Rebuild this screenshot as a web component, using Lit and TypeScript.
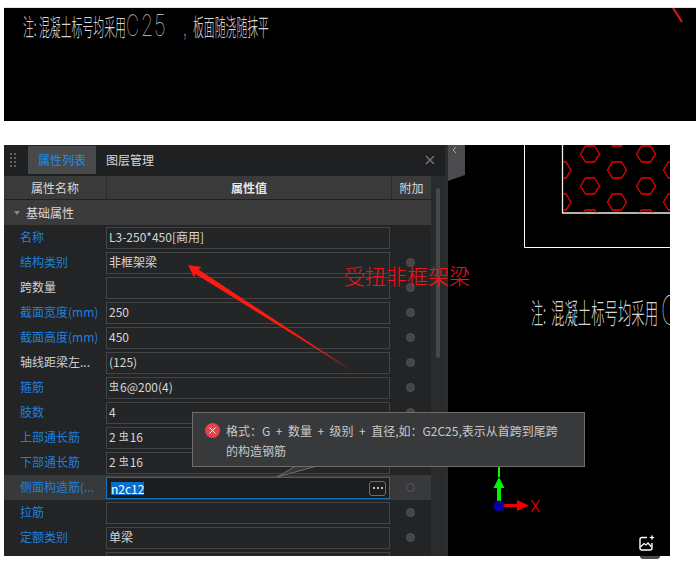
import { LitElement, html, css, svg } from "lit";
import { customElement } from "lit/decorators.js";

interface Row { label: string; value: string; blue: boolean; dot: boolean; active?: boolean; }

const COLON = "\uFF1A";
const TIP_LINE = `格式${COLON}G + 数量 + 级别 + 直径,如${COLON}G2C25,表示从首跨到尾跨`;

const ROWS: Row[] = [
  { label: "名称", value: "L3-250*450[商用]", blue: true, dot: false },
  { label: "结构类别", value: "非框架梁", blue: true, dot: true },
  { label: "跨数量", value: "", blue: false, dot: true },
  { label: "截面宽度(mm)", value: "250", blue: true, dot: true },
  { label: "截面高度(mm)", value: "450", blue: true, dot: true },
  { label: "轴线距梁左...", value: "(125)", blue: false, dot: true },
  { label: "箍筋", value: "~6@200(4)", blue: true, dot: true },
  { label: "肢数", value: "4", blue: true, dot: true },
  { label: "上部通长筋", value: "2~16", blue: true, dot: true },
  { label: "下部通长筋", value: "2~16", blue: true, dot: true },
  { label: "侧面构造筋(...", value: "n2c12", blue: true, dot: true, active: true },
  { label: "拉筋", value: "", blue: true, dot: true },
  { label: "定额类别", value: "单梁", blue: true, dot: true },
  { label: "", value: "", blue: false, dot: false },
];

const HEXES: [number, number][] = [
  [617, 138], [590, 154], [646, 154], [561.5, 170], [617, 170], [673, 170],
  [590, 186], [646, 186], [561.5, 202], [617, 202], [673, 202], [590, 218], [646, 218],
];

const hexPoints = (cx: number, cy: number) =>
  [[-9.5, 0], [-4.5, -8], [4.5, -8], [9.5, 0], [4.5, 8], [-4.5, 8]]
    .map(([x, y]) => `${cx + x},${cy + y}`).join(" ");

/** CAD text is drawn condensed: real text, squeezed horizontally. */
const cadText = (x: number, y: number, size: number, sx: number, text: string, cls = "cad-text") =>
  svg`<text class=${cls} transform="translate(${x} ${y}) scale(${sx} 1)" font-size=${size}>${text}</text>`;

@customElement("app-root")
export class AppRoot extends LitElement {
  static styles = css`
    :host {
      display: block;
      width: 696px;
      height: 572px;
      background: #fff;
      overflow: hidden;
      font-family: "Noto Sans CJK SC", "Liberation Sans", sans-serif;
      font-size: 12px;
    }
    .banner { margin: 7px 0 0 4px; border-top: 1px solid #e4e4e4; background: #000; height: 113px; }
    .banner svg, .cad svg { display: block; }
    .cad-text { font-family: "Noto Sans CJK SC", sans-serif; font-weight: 300; fill: #d6d6d6; }
    .thin { font-family: "Inter", "Liberation Sans", sans-serif; font-weight: 100; fill: #cfcfcf; }
    .work { position: relative; display: flex; margin: 24px 0 0 4px; width: 666px; height: 411px; }
    .panel { width: 441px; border-right: 3px solid #2c2d2f; background: #232426; display: flex; flex-direction: column; color: #d2d2d2; overflow: hidden; }
    .tabs { height: 31px; flex: none; display: flex; align-items: flex-start; background: #1f2022; position: relative; }
    .grip { width: 8px; margin: 8px 10px 0 6px; display: grid; grid-template-columns: 2px 2px; gap: 2px 2px; }
    .grip i { width: 2px; height: 2px; background: #5f6062; display: block; }
    .tab { height: 28px; line-height: 28px; margin-top: 1px; padding: 0 10px; width: 48px; color: #d8d8d8; }
    .tab.on { background: #48494b; color: #2289e6; margin-right: 0; }
    .tab.off { margin-left: 0; }
    .close { margin-left: auto; margin-right: 10px; margin-top: 10px; width: 10px; height: 10px; }
    .main { flex: 1; display: flex; min-height: 0; }
    .table { width: 427px; flex: none; overflow: hidden; }
    .gutter { flex: 1; background: #2a2b2d; }
    .thumb { width: 4px; height: 170px; margin: 12px 0 0 5px; border-radius: 2px; background: #47484a; }
    .head { display: grid; grid-template-columns: 102px 285px 40px; height: 23px; line-height: 23px; background: #3a3a3b; border-bottom: 1px solid #1f2022; text-align: center; color: #d8d8d8; }
    .head div + div { border-left: 1px solid #2b2c2e; }
    .head .val { font-weight: 700; color: #e6e6e6; }
    .group { height: 25px; line-height: 25px; background: #3b3b3c; display: flex; align-items: center; color: #d8d8d8; }
    .caret { width: 0; height: 0; margin: 0 6px 0 10px; border: 3px solid transparent; border-top: 4px solid #8a8a8a; border-bottom: 0; }
    .row { height: 25px; display: grid; grid-template-columns: 102px 284px 41px; align-items: start; }
    .row.active { background: #38393b; }
    .label { padding-left: 16px; line-height: 23px; color: #cfcfcf; white-space: nowrap; overflow: hidden; }
    .label.blue { color: #1f80dc; }
    .field { height: 22px; margin-top: 2px; box-sizing: border-box; border: 1px solid #434445; background: #242527; padding: 0 2px 2px; line-height: 18px; color: #d6d6d6; display: flex; align-items: center; justify-content: space-between; white-space: nowrap; }
    .field.active { border-color: #1272b8; background: #1c1d1f; padding: 0 2px 0 4px; }
    .sel { background: #0a6ecc; color: #fff; line-height: 13px; height: 13px; display: block; }
    .more { width: 15px; height: 13px; border: 1px solid #6c6c6c; border-radius: 3px; display: flex; align-items: center; justify-content: center; gap: 2px; box-sizing: content-box; margin-right: 1px; }
    .more i { width: 2px; height: 2px; background: #bdbdbd; display: block; }
    .rebar { font-size: 10px; position: relative; top: -2px; margin: 0 1px 0 3px; }
    .rebar.first { margin-left: 0; }
    .dot { width: 9px; height: 9px; margin: 8px 0 0 16px; box-sizing: border-box; border-radius: 50%; background: #444547; border: 1px solid #515254; }
    .row.active .dot { background: #39393b; border-color: #58595b; }
    .cad { width: 222px; height: 411px; background: #000; flex: none; overflow: hidden; }
    .overlay { position: absolute; left: 0; top: 0; width: 666px; height: 427px; pointer-events: none; overflow: visible; }
    .note { position: absolute; left: 340px; top: 115px; font-size: 21px; line-height: 30px; color: #f01414; font-weight: 300; white-space: nowrap; }
    .tip { position: absolute; left: 188px; top: 267px; width: 393px; height: 55px; box-sizing: border-box; background: #38393b; border: 1px solid #6e6e6e; color: #c9c9c9; padding: 8px 0 0 33px; line-height: 20px; font-size: 12px; word-spacing: 2.8px; }
    .tip p { margin: 0; white-space: pre; }
    .err { position: absolute; left: 12px; top: 10px; width: 15px; height: 15px; }
    .tail { position: absolute; left: 272px; top: 320px; width: 42px; height: 13px; }
    .ai { position: absolute; left: 632px; top: 388px; width: 20px; height: 20px; }
    .ai-shade { position: absolute; left: 636px; top: 411px; width: 20px; height: 3px; border-radius: 0 0 10px 10px; background: #4a4a4a; }
  `;

  private value(v: string) {
    const parts = v.split("~");
    if (parts.length === 1) return v;
    return html`${parts[0]}<span class="rebar ${parts[0] ? "" : "first"}">虫</span>${parts[1]}`;
  }

  private row(r: Row) {
    return html`<div class="row ${r.active ? "active" : ""}">
      <div class="label ${r.blue ? "blue" : ""}">${r.label}</div>
      <div class="field ${r.active ? "active" : ""}">
        ${r.active
          ? html`<span class="sel">${r.value}</span><span class="more"><i></i><i></i><i></i></span>`
          : html`<span>${this.value(r.value)}</span>`}
      </div>
      ${r.dot ? html`<div class="dot"></div>` : html`<div></div>`}
    </div>`;
  }

  render() {
    return html`
      <div class="banner">
        <svg width="692" height="113" viewBox="4 8 692 113">
          ${cadText(23, 36, 24, 0.45, "注:")}
          ${cadText(39, 36, 24, 0.453, "混凝土标号均采用")}
          ${cadText(126, 36, 29, 0.62, "C", "thin")}
          ${cadText(141, 36, 29, 0.68, "2", "thin")}
          ${cadText(154, 36, 29, 0.72, "5", "thin")}
          ${cadText(184, 36, 24, 0.29, ",")}
          ${cadText(193, 36, 24, 0.452, "板面随浇随抹平")}
          <line x1="673" y1="8" x2="682" y2="22" stroke="#e8102a" stroke-width="2"></line>
        </svg>
      </div>
      <div class="work">
        <section class="panel">
          <div class="tabs">
            <div class="grip">${Array.from({ length: 8 }, () => html`<i></i>`)}</div>
            <div class="tab on">属性列表</div>
            <div class="tab off">图层管理</div>
            <svg class="close" viewBox="0 0 10 10"><path d="M1 1l8 8M9 1l-8 8" stroke="#77787a" stroke-width="1.2" fill="none"></path></svg>
          </div>
          <div class="main">
            <div class="table">
              <div class="head"><div>属性名称</div><div class="val">属性值</div><div>附加</div></div>
              <div class="group"><span class="caret"></span>基础属性</div>
              ${ROWS.map((r) => this.row(r))}
            </div>
            <div class="gutter"><div class="thumb"></div></div>
          </div>
        </section>
        <div class="cad">
          <svg width="222" height="411" viewBox="448 145 222 411">
            <polygon points="448,145 465,145 465,175 448,181" fill="#4b4b4d"></polygon>
            <path d="M456 147l-3 3 3 3" stroke="#a8a8a8" stroke-width="1" fill="none"></path>
            <path d="M524.5 145V247.5H670" stroke="#fff" stroke-width="1" fill="none"></path>
            <path d="M562.5 145V213H670" stroke="#eee" stroke-width="1.3" fill="none"></path>
            <svg x="563" y="145" width="107" height="67.5" viewBox="563 145 107 67.5">
              ${HEXES.map(([x, y]) => svg`<polygon points=${hexPoints(x, y)} fill="none" stroke="#f00000" stroke-width="1.3"></polygon>`)}
            </svg>
            ${cadText(531, 324, 28, 0.43, "注:")}
            ${cadText(551, 324, 28, 0.478, "混凝土标号均采用")}
            ${cadText(661, 325, 40, 0.6, "C", "thin")}
            <path d="M498 467h2v10h-2z" fill="#00ff00"></path>
            <path d="M499 477l5.5 11h-3.5v18h-4v-18h-3.5z" fill="#00f000"></path>
            <path d="M499 504h18v-4l12 5.5-12 5.5v-4h-18z" fill="#f00000"></path>
            <circle cx="499" cy="506" r="5.5" fill="#0000a0"></circle>
            <path d="M531.5 500l8 12M539.5 500l-8 12" stroke="#f00000" stroke-width="1.2" fill="none"></path>
          </svg>
        </div>
        <svg class="overlay" viewBox="4 145 666 427">
          <polygon points="188,265 201.5,267 198.5,269.5 354,372 195.5,274 194,277.5" fill="#ff1a10"></polygon>
        </svg>
        <div class="note">受扭非框架梁</div>
        <svg class="tail" viewBox="0 0 42 13">
          <polygon points="1,12 20,1 41,1" fill="#38393b"></polygon>
          <path d="M1 12L20 1M1 12L41 1" stroke="#6e6e6e" stroke-width="1" fill="none"></path>
        </svg>
        <div class="tip">
          <svg class="err" viewBox="0 0 15 15">
            <circle cx="7.5" cy="7.5" r="7.5" fill="#ea4049"></circle>
            <path d="M4.5 4.5l6 6M10.5 4.5l-6 6" stroke="#fff" stroke-width="1" fill="none"></path>
          </svg>
          <p>${TIP_LINE}</p>
          <p>的构造钢筋</p>
        </div>
        <div class="ai-shade"></div>
        <svg class="ai" viewBox="0 0 20 20">
          <path d="M11 4.5H6a2 2 0 0 0-2 2V15a2 2 0 0 0 2 2h8a2 2 0 0 0 2-2V10" stroke="#fff" stroke-width="1.4" fill="none"></path>
          <path d="M4.5 14l3.5-3.5 2 1.5 2-2 3.5 4" stroke="#fff" stroke-width="1.2" fill="none"></path>
          <path d="M16 1.5l.8 2.2 2.2.8-2.2.8-.8 2.2-.8-2.2-2.2-.8 2.2-.8z" fill="#fff"></path>
        </svg>
      </div>
    `;
  }
}
